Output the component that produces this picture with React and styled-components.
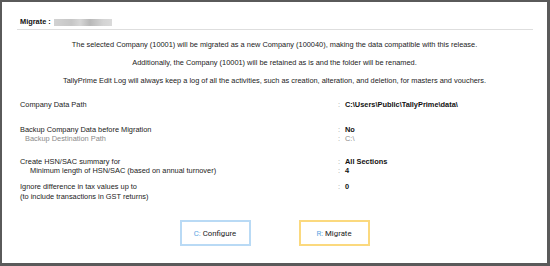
import React from "react";
import styled, { createGlobalStyle } from "styled-components";

const GlobalStyle = createGlobalStyle`
  html, body {
    margin: 0;
    padding: 0;
    background: #ffffff;
  }
  body {
    font-family: "Liberation Sans", Arial, sans-serif;
  }
`;

const rows = [
  {
    gap: 14,
    items: [{ label: "Company Data Path", value: "C:\\Users\\Public\\TallyPrime\\data\\" }],
  },
  {
    gap: 16,
    items: [
      { label: "Backup Company Data before Migration", value: "No" },
      { label: "Backup Destination Path", value: "C:\\", muted: true, indent: 5 },
    ],
  },
  {
    gap: 14,
    items: [
      { label: "Create HSN/SAC summary for", value: "All Sections" },
      { label: "Minimum length of HSN/SAC (based on annual turnover)", value: "4", indent: 10 },
    ],
  },
  {
    gap: 7,
    tall: true,
    items: [
      { label: "Ignore difference in tax values up to", value: "0" },
      { label: "(to include transactions in GST returns)" },
    ],
  },
];

const App = () => {
  return (
    <>
      <GlobalStyle />
      <Frame>
        <Header>
          <Title>Migrate :</Title>
          <Redacted />
        </Header>

        <Messages>
          <p>
            The selected Company (10001) will be migrated as a new Company (100040), making the
            data compatible with this release.
          </p>
          <p>
            Additionally, the Company (10001) will be retained as is and the folder will be
            renamed.
          </p>
          <p>
            TallyPrime Edit Log will always keep a log of all the activities, such as creation,
            alteration, and deletion, for masters and vouchers.
          </p>
        </Messages>

        {rows.map((group, gi) => (
          <Group key={gi} $gap={group.gap} $tall={group.tall}>
            {group.items.map((item, ii) => (
              <Row key={ii} $muted={item.muted}>
                <Label $indent={item.indent || 0}>{item.label}</Label>
                <Colon>{item.value !== undefined ? ":" : ""}</Colon>
                <Value $muted={item.muted}>{item.value}</Value>
              </Row>
            ))}
          </Group>
        ))}

        <Actions>
          <Button $tone="blue">
            <Key>C:</Key> Configure
          </Button>
          <Button $tone="yellow">
            <Key>R:</Key> Migrate
          </Button>
        </Actions>
      </Frame>
    </>
  );
};

export default App;

const Frame = styled.div`
  box-sizing: border-box;
  width: 550px;
  height: 266px;
  border-style: solid;
  border-color: #5a5a5a;
  border-width: 2px 3px 3px 2px;
  background: #ffffff;
  color: #222222;
  font-size: 7.4px;
  overflow: hidden;
`;

const Header = styled.div`
  display: flex;
  align-items: center;
  gap: 3px;
  margin: 15px 14px 0 15px;
  padding: 0 0 2px 3px;
  height: 10px;
  border-bottom: 1px solid #dedede;
`;

const Title = styled.span`
  font-weight: bold;
  color: #111111;
  line-height: 10px;
`;

const Redacted = styled.span`
  display: inline-block;
  width: 58px;
  height: 7px;
  background: linear-gradient(
    90deg,
    #d2d2d2 0%,
    #c6c6c6 30%,
    #d6d6d6 45%,
    #b8b8b8 62%,
    #c2c2c2 70%,
    #d4d4d4 85%,
    #dadada 100%
  );
  filter: blur(0.4px);
`;

const Messages = styled.div`
  margin-top: 10px;
  display: flex;
  flex-direction: column;
  gap: 8px;
  text-align: center;

  p {
    margin: 0;
    line-height: 10px;
  }
`;

const Group = styled.div`
  margin-top: ${(p) => p.$gap}px;
  padding-left: 18px;
  line-height: ${(p) => (p.$tall ? 10 : 9)}px;
`;

const Row = styled.div`
  display: grid;
  grid-template-columns: 318px 7px 1fr;
  color: ${(p) => (p.$muted ? "#8a8a8a" : "#222222")};
`;

const Label = styled.span`
  padding-left: ${(p) => p.$indent}px;
  white-space: nowrap;
`;

const Colon = styled.span`
  color: #9a9a9a;
`;

const Value = styled.span`
  font-weight: ${(p) => (p.$muted ? "normal" : "bold")};
  color: ${(p) => (p.$muted ? "#8a8a8a" : "#111111")};
`;

const Actions = styled.div`
  display: flex;
  justify-content: center;
  gap: 48px;
  margin-top: 18px;
`;

const Button = styled.div`
  box-sizing: border-box;
  width: 71px;
  height: 26px;
  display: flex;
  align-items: center;
  justify-content: center;
  border: 2px solid ${(p) => (p.$tone === "blue" ? "#b9daf5" : "#fbd97e")};
  color: #222222;
  font-size: 7.8px;
  font-family: Roboto, "Liberation Sans", sans-serif;
  white-space: pre;
`;

const Key = styled.span`
  color: #5fa6e2;
`;
